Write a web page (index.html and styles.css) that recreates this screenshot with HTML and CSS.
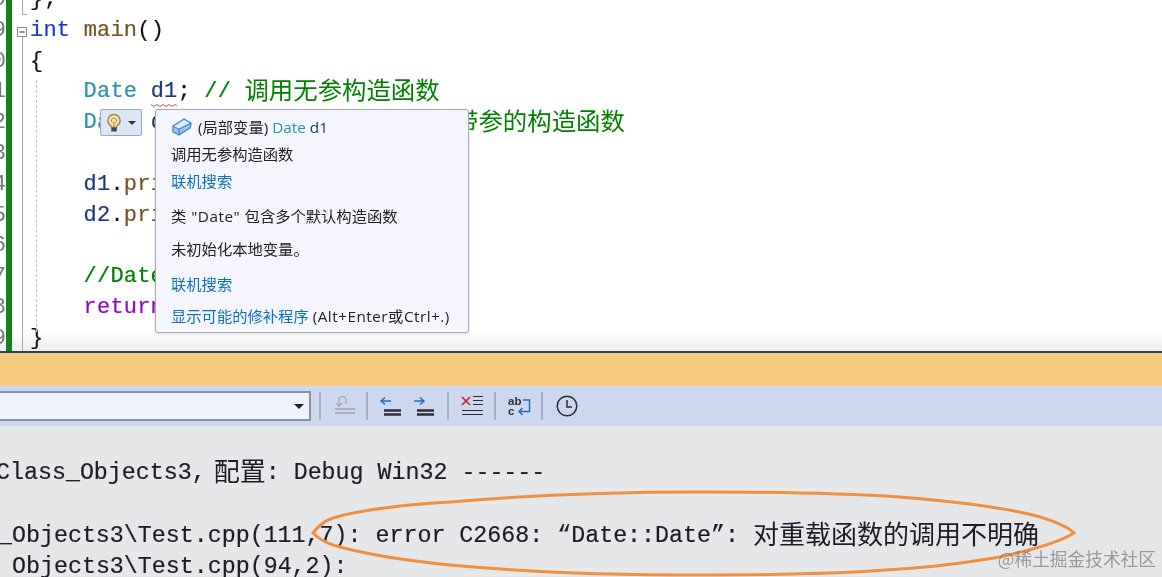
FILE: index.html
```html
<!DOCTYPE html>
<html lang="zh">
<head>
<meta charset="utf-8">
<title>Visual Studio</title>
<link rel="stylesheet" href="styles.css">
</head>
<body>
<main class="screen">
  <section class="editor">
    <div class="nums">
      <div>9</div><div>9</div><div>0</div><div>1</div><div>2</div><div>3</div><div>4</div><div>5</div><div>6</div><div>7</div><div>8</div><div>9</div>
    </div>
    <div class="bar"></div>
    <svg class="fold" width="18" height="351" viewBox="0 0 18 351">
      <path d="M10.5 0V14.5H15" fill="none" stroke="#a8a8a8"/>
      <rect x="5.5" y="27.5" width="9" height="9" fill="#fff" stroke="#8c8c8c"/>
      <path d="M7.5 32H12.5" stroke="#333"/>
      <path d="M10.5 37V351" stroke="#a8a8a8"/>
    </svg>
    <div class="code">
      <div class="ln">};</div>
      <div class="ln"><span class="kw">int</span> <span class="fn">main</span>()</div>
      <div class="ln">{</div>
      <div class="ln">    <span class="ty">Date</span> <span class="var">d1</span>; <span class="cm">// <span class="cjk">调用无参构造函数</span></span></div>
      <div class="ln">    <span class="ty">Date</span> <span class="var">d2</span>(2022, 1, 1); <span class="cm">// <span class="cjk">调用带参的构造函数</span></span></div>
      <div class="ln"></div>
      <div class="ln">    <span class="var">d1</span>.<span class="fn">print</span>();</div>
      <div class="ln">    <span class="var">d2</span>.<span class="fn">print</span>();</div>
      <div class="ln"></div>
      <div class="ln">    <span class="cm">//Date d3;</span></div>
      <div class="ln">    <span class="ret">return</span> 0;</div>
      <div class="ln">}</div>
    </div>
    <div class="guide"></div>
    <svg class="squiggle" width="26" height="5" viewBox="0 0 26 5"><path d="M0 1.5 3 3.5 6 1.5 9 3.5 12 1.5 15 3.5 18 1.5 21 3.5 24 1.5 26 3" fill="none" stroke="#e0504a" stroke-width="1"/></svg>
    <div class="bulb">
      <svg width="18" height="22" viewBox="0 0 18 20">
        <path d="M9 1.5a6 6 0 0 0-3.6 10.8c.8.7 1 1.400 1 2.200h5.200c0-.8.200-1.500 1-2.200A6 6 0 0 0 9 1.500z" fill="#f6e3b4" stroke="#a5803c" stroke-width="1.300"/>
        <path d="M9 5a2.600 2.600 0 0 0-1.500 4.700M9 5a2.600 2.600 0 0 1 1.500 4.700M9 9v5" fill="none" stroke="#a5803c"/>
        <rect x="6.300" y="14.500" width="5.400" height="4" fill="#444"/>
      </svg>
      <svg width="8" height="4" viewBox="0 0 8 4"><path d="M0 0H8L4 4z" fill="#333"/></svg>
    </div>
    <div class="tip">
      <div class="tip-title">
        <svg width="20" height="18" viewBox="0 0 20 18">
          <path d="M1 8 12 1l7 4-1 5-11 7-6-3z" fill="#9cc4ea" stroke="#3d86c6" stroke-width="1.300" stroke-linejoin="round"/>
          <path d="M1 8l6 3 12-6M7 11v6" fill="none" stroke="#3d86c6" stroke-width="1.300"/>
          <path d="M2 8.200 12 2l5.500 3.100L7 10.500z" fill="#dcebf9"/>
        </svg>
        <span>(局部变量) <span class="ty">Date</span> <span class="var">d1</span></span>
      </div>
      <div class="tip-row near">调用无参构造函数</div>
      <div class="tip-row near link">联机搜索</div>
      <div class="tip-row far"><span class="hint">类 "Date" </span>包含多个默认构造函数</div>
      <div class="tip-row mid">未初始化本地变量。</div>
      <div class="tip-row far link">联机搜索</div>
      <div class="tip-row last"><span class="link">显示可能的修补程序</span> <span class="hint">(Alt+Enter或Ctrl+.)</span></div>
    </div>
  </section>

  <div class="titlebar"></div>

  <div class="toolbar">
    <div class="combo"><svg width="10" height="5" viewBox="0 0 10 5"><path d="M0 0H10L5 5z" fill="#222"/></svg></div>
    <span class="sep first"></span>
    <svg class="tool t1" width="24" height="22" viewBox="0 0 24 22">
      <path d="M14 9V5a3.500 3.500 0 0 0-7 0v6M4 8l3 3.500L10 8" fill="none" stroke="#a9afbd" stroke-width="1.400"/>
      <path d="M3 14H23M3 18H23" stroke="#a9afbd" stroke-width="2"/>
    </svg>
    <span class="sep s2"></span>
    <svg class="tool t2" width="22" height="22" viewBox="0 0 22 22">
      <path d="M12 6H2M6 2.500 2 6l4 3.500" fill="none" stroke="#1f6fc0" stroke-width="1.500"/>
      <path d="M5 15.500H22M5 19.500H22" stroke="#2a2d38" stroke-width="2.400"/>
    </svg>
    <svg class="tool t3" width="22" height="22" viewBox="0 0 22 22">
      <path d="M1 6H11M7 2.500 11 6 7 9.500" fill="none" stroke="#1f6fc0" stroke-width="1.500"/>
      <path d="M4 15.500H21M4 19.500H21" stroke="#2a2d38" stroke-width="2.400"/>
    </svg>
    <span class="sep s3"></span>
    <svg class="tool t4" width="22" height="22" viewBox="0 0 22 22">
      <path d="M1 2 9 10M9 2 1 10" stroke="#c4263c" stroke-width="1.700"/>
      <path d="M12 1.500H22M12 5.500H22M12 9.500H22M1 15.500H22M1 19.500H22" stroke="#2a2d38" stroke-width="1.200"/>
    </svg>
    <span class="sep s4"></span>
    <svg class="tool t5" width="24" height="22" viewBox="0 0 24 22">
      <text x="1" y="10" class="ico-text">ab</text>
      <text x="1" y="20" class="ico-text">c</text>
      <path d="M16 5H22.500V16.500H12M15.500 13 12 16.500l3.500 3.500" fill="none" stroke="#1f6fc0" stroke-width="1.500"/>
    </svg>
    <span class="sep s5"></span>
    <svg class="tool t6" width="22" height="22" viewBox="0 0 22 22">
      <circle cx="11" cy="11" r="9.800" fill="none" stroke="#2a2d38" stroke-width="1.500"/>
      <path d="M11 5V12H16" fill="none" stroke="#2a2d38" stroke-width="1.500"/>
    </svg>
  </div>

  <section class="output">
    <div class="out first-line">Class_Objects3, <span class="cjk2 pull">配置</span>: Debug Win32 ------</div>
    <div class="out"></div>
    <div class="out second-line">_Objects3\Test.cpp(111,7): error C2668: “Date::Date”: <span class="cjk2">对重载函数的调用不明确</span></div>
    <div class="out third-line">Objects3\Test.cpp(94,2):</div>
    <svg class="ring" width="770" height="90" viewBox="0 0 770 90">
      <path d="M3 43C8 36 14 31 23 28C50 20 90 15 140 12C220 5 310 2 390 2C460 2 530 3 590 7C640 11 690 17 723 25C745 31 758 37 764 43C750 52 722 60 690 67C660 72 625 77 590 79C530 84 460 85 390 85C300 85 215 82 140 75C90 70 50 63 23 55C14 52 8 48 3 43Z" fill="none" stroke="#ef8f42" stroke-width="3"/>
    </svg>
    <div class="mark">@稀土掘金技术社区</div>
  </section>
</main>
</body>
</html>
```

FILE: styles.css
```css
* { box-sizing: border-box; }
html, body { margin: 0; padding: 0; }
body { width: 1162px; height: 577px; overflow: hidden; background: #e6e7e9; }
.screen { width: 1162px; height: 577px; overflow: hidden; display: flex; flex-direction: column; filter: blur(0.35px); }

.editor {
  position: relative; height: 351px; flex: none; display: flex; overflow: hidden;
  background: linear-gradient(#fff 332px, #ededed 351px);
}
.nums { width: 6px; flex: none; margin-top: -15px; color: #777; font: 22px/30.8px "Liberation Mono", monospace; }
.nums div { height: 30.8px; display: flex; justify-content: flex-end; }
.bar { width: 6px; flex: none; background: #14831c; }
.fold { flex: none; display: block; }
.code {
  flex: 1; margin-top: -15px; color: #111;
  font: 22px/30.8px "Liberation Mono", "Noto Sans CJK SC", monospace;
  letter-spacing: 0.2px;
  -webkit-text-stroke: 0.2px currentColor;
}
.ln { height: 30.8px; white-space: pre; }
.kw { color: #1c39d4; }
.fn { color: #74531f; }
.ty { color: #2b91af; }
.var { color: #1f377f; }
.cm { color: #008000; }
.ret { color: #8f08c4; }
.cjk {
  font-family: "Noto Sans CJK SC", sans-serif; font-size: 24.4px; line-height: 0; letter-spacing: 0;
  vertical-align: -2px; -webkit-text-stroke: 0;
}
.guide { position: absolute; left: 36px; top: 80px; height: 252px; border-left: 1px dashed #c4c4c4; }
.squiggle { position: absolute; left: 151px; top: 103px; }
.bulb {
  position: absolute; left: 100px; top: 109px; width: 42px; height: 27px;
  display: flex; align-items: center; gap: 5px; padding-left: 4px;
  background: #dde6f6; border: 1px solid #9aa6c6; border-radius: 2px;
}
.tip {
  position: absolute; left: 155px; top: 109px; width: 314px; height: 224px; padding: 7px 15px;
  background: #f5f6fd; border: 1px solid #a7aab2; border-radius: 3px;
  box-shadow: 0 1px 3px rgba(0,0,0,.15);
  color: #222; font: 15.3px/20px "Open Sans", "Noto Sans CJK SC", sans-serif; white-space: nowrap;
}
.tip-title { display: flex; align-items: center; gap: 6px; height: 20px; margin-left: 1px; }
.tip-row { height: 20px; }
.near { margin-top: 7px; }
.far { margin-top: 15px; }
.mid { margin-top: 13px; }
.last { margin-top: 12px; }
.link { color: #0e70c0; }
.hint { letter-spacing: 0.5px; }

.titlebar { height: 35px; flex: none; background: #f5cb82; border-top: 2px solid #2f4358; }

.toolbar { height: 40px; flex: none; background: #cdd7ee; display: flex; align-items: center; }
.combo {
  width: 311px; height: 30px; flex: none; display: flex; align-items: center; justify-content: flex-end;
  padding-right: 5px; background: #eef2fc; border: 2px solid #8a8fa8; border-left: 0;
}
.sep { width: 2px; height: 28px; flex: none; background: #a4aec9; }
.sep.first { margin-left: 8px; }
.tool { flex: none; display: block; }
.t1 { margin-left: 11px; }
.sep.s2 { margin-left: 10px; }
.t2 { margin-left: 11px; }
.t3 { margin-left: 12px; }
.sep.s3 { margin-left: 12px; }
.t4 { margin-left: 12px; }
.sep.s4 { margin-left: 11px; }
.t5 { margin-left: 11px; }
.sep.s5 { margin-left: 10px; }
.t6 { margin-left: 13px; }
.ico-text { font: bold 11.5px "Liberation Sans", sans-serif; fill: #2a2d38; }

.output {
  position: relative; flex: 1; padding-top: 32px; background: #e6e7e9; color: #1c1c28;
  font: 23.3px/31.3px "Liberation Mono", "Noto Sans CJK SC", monospace;
  -webkit-text-stroke: 0.2px currentColor;
}
.out { height: 31.3px; white-space: pre; }
.first-line { margin-left: -4px; }
.second-line { margin-left: -2px; }
.third-line { margin-left: 12px; }
.cjk2 { font-family: "Noto Sans CJK SC", sans-serif; font-size: 26px; line-height: 0; vertical-align: -2px; -webkit-text-stroke: 0; }
.pull { margin-left: -6px; }
.ring { position: absolute; left: 310px; top: 64px; }
.mark {
  position: absolute; right: 6px; top: 120px; color: rgba(110,110,115,.65);
  font: 17.7px/24px "Noto Sans CJK SC", sans-serif; -webkit-text-stroke: 0;
}
```
